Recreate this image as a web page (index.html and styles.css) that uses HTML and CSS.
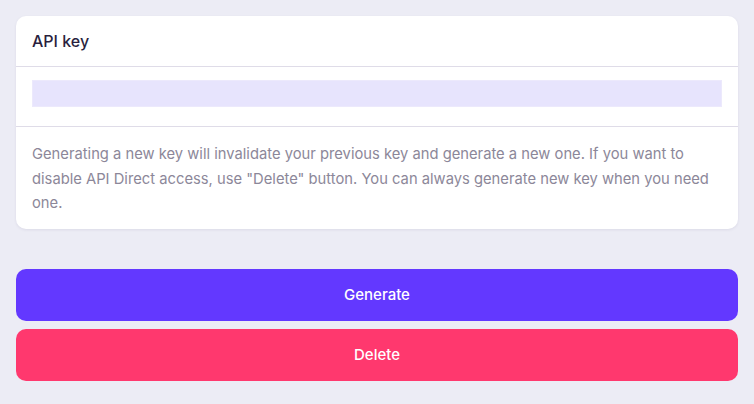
FILE: index.html
```html
<!DOCTYPE html>
<html>
<head>
<meta charset="utf-8">
<link rel="stylesheet" href="styles.css">
</head>
<body>
<div class="page">
  <section class="card">
    <header class="card-header">API key</header>
    <div class="card-input">
      <div class="key-field"></div>
    </div>
    <p class="card-note">Generating a new key will invalidate your previous key and generate a new one. If you want to disable API Direct access, use "Delete" button. You can always generate new key when you need one.</p>
  </section>
  <div class="actions">
    <button class="btn btn-generate">Generate</button>
    <button class="btn btn-delete">Delete</button>
  </div>
</div>
</body>
</html>
```
FILE: styles.css
```css
html, body {
  margin: 0;
  padding: 0;
  background: #ececf5;
  font-family: Inter, "Noto Sans", sans-serif;
}
.page {
  padding: 16px;
  display: flex;
  flex-direction: column;
  gap: 40px;
}
.card {
  background: #fff;
  border-radius: 10px;
  box-shadow: 0 1px 3px rgba(40, 30, 80, 0.08);
}
.card-header {
  padding: 16px 16px;
  line-height: 18px;
  font-size: 16px;
  font-weight: 450;
  color: #2a1f3e;
  border-bottom: 1px solid #dfdce8;
}
.card-input {
  padding: 13px 16px 19px;
  border-bottom: 1px solid #dfdce8;
}
.key-field {
  height: 27px;
  background: #e7e4fd;
  border: 1px solid #ece9fc;
  box-sizing: border-box;
}
.card-note {
  margin: 0;
  padding: 15px 16px 13px;
  font-size: 14.75px;
  line-height: 24.5px;
  color: #8c8799;
}
.actions {
  display: flex;
  flex-direction: column;
  gap: 8px;
}
.btn {
  height: 52px;
  border: none;
  border-radius: 10px;
  color: #fff;
  font-family: Inter, "Noto Sans", sans-serif;
  font-size: 15px;
  font-weight: 450;
  cursor: pointer;
}
.btn-generate {
  background: #6338ff;
}
.btn-delete {
  background: #ff386e;
}
```
